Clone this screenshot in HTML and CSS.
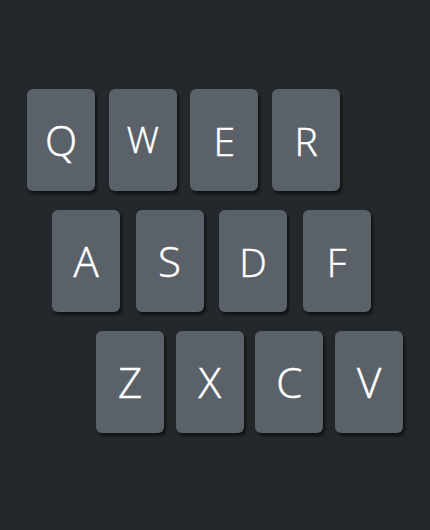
FILE: index.html
```html
<!DOCTYPE html>
<html>
<head>
<meta charset="utf-8">
<link rel="stylesheet" href="styles.css">
</head>
<body>
<div class="keyboard">
  <div class="row row-1">
    <div class="key">Q</div>
    <div class="key key-sm">W</div>
    <div class="key key-md">E</div>
    <div class="key key-md">R</div>
  </div>
  <div class="row row-2">
    <div class="key">A</div>
    <div class="key">S</div>
    <div class="key key-md">D</div>
    <div class="key key-md">F</div>
  </div>
  <div class="row row-3">
    <div class="key">Z</div>
    <div class="key">X</div>
    <div class="key">C</div>
    <div class="key">V</div>
  </div>
</div>
</body>
</html>
```
FILE: styles.css
```css
html, body {
  margin: 0;
  height: 100%;
  background: #23282c;
}
body {
  font-family: "Open Sans", "Noto Sans", sans-serif;
}
.keyboard {
  padding-top: 89px;
  display: flex;
  flex-direction: column;
  gap: 19px;
}
.row {
  display: flex;
}
.row-1 { margin-left: 27px; gap: 13.7px; }
.row-2 { margin-left: 52px; gap: 15.5px; }
.row-3 { margin-left: 96px; gap: 11.7px; }
.key {
  width: 68px;
  height: 102px;
  border-radius: 6px;
  background: #5a6168;
  box-shadow: 2px 3px 3px rgba(0, 0, 0, 0.55);
  color: #ffffff;
  font-size: 42px;
  font-weight: 300;
  -webkit-text-stroke: 0.5px #ffffff;
  line-height: 1;
  display: flex;
  align-items: center;
  justify-content: center;
}
.key-sm { font-size: 36px; }
.key-md { font-size: 39px; }
```
